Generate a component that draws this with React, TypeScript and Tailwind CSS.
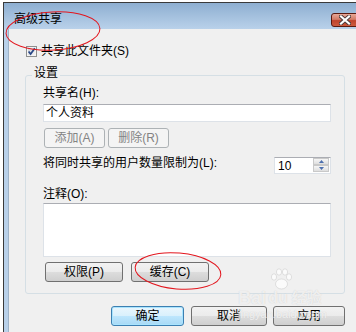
import React from 'react';

// ── Win7 style push button ────────────────────────────────────────────────────

type Kind = 'normal' | 'disabled' | 'default';

const BTN_STYLES: Record<Kind, string> = {
  normal:
    'border-[#707070] bg-[linear-gradient(#f2f2f2,#ebebeb_50%,#dddddd_50%,#cfcfcf)] text-black',
  disabled: 'border-[#adb2b5] bg-[#f4f4f4] text-[#838383]',
  default:
    'border-[#3c7fb1] bg-[linear-gradient(#eaf6fd,#d9f0fc_50%,#bee6fd_50%,#a7d9f5)] text-black shadow-[inset_0_0_0_1px_#a9e4fe]',
};

function Btn({ label, kind = 'normal', className = '' }: { label: string; kind?: Kind; className?: string }) {
  return (
    <div
      className={`h-[20px] shrink-0 rounded-[3px] border flex items-center justify-center text-[12px] leading-[12px] ${BTN_STYLES[kind]} ${className}`}
    >
      {label}
    </div>
  );
}

function CheckBox() {
  return (
    <svg width="11" height="11" viewBox="0 0 11 11" className="shrink-0">
      <defs>
        <linearGradient id="cb" x1="0" y1="0" x2="1" y2="1">
          <stop offset="0" stopColor="#cbcfd5" />
          <stop offset="1" stopColor="#f6f6f6" />
        </linearGradient>
      </defs>
      <rect x="0.5" y="0.5" width="10" height="10" fill="#f4f4f4" stroke="#8e8f8f" />
      <rect x="2" y="2" width="7" height="7" fill="url(#cb)" />
      <path d="M2.6 5.4 L4.6 8 L8.8 2.2" fill="none" stroke="#2a4787" strokeWidth="1.7" />
    </svg>
  );
}

function Spinner() {
  return (
    <div className="w-[57px] h-[17px] border border-[#dde2e8] border-t-[#abadb3] bg-white flex items-start">
      <span className="pl-[3px] pt-[2px] leading-[12px] flex-1">10</span>
      <div className="w-[16px] h-[14px] flex flex-col mr-[1px]">
        {[0, 1].map(i => (
          <div
            key={i}
            className="flex-1 border border-[#c9c9c9] bg-[linear-gradient(#f6f6f6,#dedede)] flex items-center justify-center"
          >
            <svg width="5" height="3" viewBox="0 0 5 3">
              <path d={i === 0 ? 'M0 3 L2.5 0 L5 3 Z' : 'M0 0 L2.5 3 L5 0 Z'} fill="#4c6fae" />
            </svg>
          </div>
        ))}
      </div>
    </div>
  );
}

// ── Dialog ───────────────────────────────────────────────────────────────────

export default function App() {
  return (
    <div className="relative w-[356px] h-[332px] overflow-hidden bg-white text-[12px] text-black font-['Liberation_Sans','Noto_Sans_CJK_SC',sans-serif]">
      <div className="mt-[2px] ml-[3px] w-[400px] h-[400px] border-l border-t border-[#3a3a3a] bg-[#b9d1ea] flex flex-col">
        {/* title bar */}
        <div className="relative h-[26px] shrink-0 bg-[linear-gradient(#8eafd1,#b9d1ea)] pl-[10px] pt-[10px] leading-[13px]">
          高级共享
          <div className="absolute left-[327px] top-[10px] w-[30px] h-[14px] rounded-[3px] border border-[#5a1a10] bg-[linear-gradient(#e7a797,#d27b66_45%,#bf432c_55%,#cc5a3e)] flex items-center pl-[7px]">
            <svg width="12" height="10" viewBox="0 0 12 10">
              <path d="M2 1.5 L10 8.5 M10 1.5 L2 8.5" stroke="#4a3a3a" strokeWidth="4" strokeLinecap="square" />
              <path d="M2 1.5 L10 8.5 M10 1.5 L2 8.5" stroke="#ffffff" strokeWidth="2.2" strokeLinecap="square" />
            </svg>
          </div>
        </div>

        <div className="flex flex-1">
          <div className="w-[4px] shrink-0" />
          <div className="flex-1 bg-[#f0f0f0] border-l border-[#9fb3c8] flex flex-col pt-[16px] pl-[16px]">
            {/* share checkbox */}
            <div className="h-[13px] flex items-center gap-[4px] pl-[1px] leading-[13px]">
              <CheckBox />
              <span>共享此文件夹(S)</span>
            </div>

            {/* settings group */}
            <div className="mt-[17px] w-[320px] h-[219px] border border-[#d5dfe5] rounded-[3px] pl-[17px] flex flex-col">
              <div className="-mt-[9px] -ml-[11px] w-fit px-[2px] h-[12px] leading-[12px] bg-[#f0f0f0]">设置</div>

              <div className="mt-[8px] leading-[12px]">共享名(H):</div>
              <div className="mt-[5px] w-[288px] h-[18px] border border-[#dde2e8] border-t-[#abadb3] bg-white pl-[2px] leading-[16px]">
                个人资料
              </div>

              <div className="mt-[6px] ml-[1px] flex gap-[3px]">
                <Btn label="添加(A)" kind="disabled" className="w-[61px]" />
                <Btn label="删除(R)" kind="disabled" className="w-[61px]" />
              </div>

              <div className="mt-[9px] w-[288px] flex justify-between items-start">
                <span className="leading-[12px]">将同时共享的用户数量限制为(L):</span>
                <Spinner />
              </div>

              <div className="mt-[14px] leading-[12px]">注释(O):</div>
              <div className="mt-[3px] w-[288px] h-[54px] border border-[#dde2e8] border-t-[#abadb3] bg-white" />

              <div className="mt-[5px] ml-[2px] flex gap-[8px]">
                <Btn label="权限(P)" className="w-[78px]" />
                <Btn label="缓存(C)" className="w-[78px]" />
              </div>
            </div>

            {/* dialog buttons */}
            <div className="mt-[12px] w-[320px] flex justify-end">
              <Btn label="确定" kind="default" className="w-[73px] mr-[7px]" />
              <Btn label="取消" className="w-[76px] mr-[6px]" />
              <Btn label="应用" className="w-[72px]" />
            </div>
          </div>
        </div>
      </div>

      {/* baidu watermark */}
      <div className="pointer-events-none absolute left-[238px] top-[268px] text-white/70 [text-shadow:0_0_1px_#c8c8c8]">
        <svg width="26" height="22" viewBox="0 0 26 22" className="ml-[30px]">
          <g fill="#ffffff" fillOpacity="0.7" stroke="#cfcfcf" strokeWidth="0.6">
            <ellipse cx="6" cy="9" rx="2.6" ry="3.2" />
            <ellipse cx="11" cy="4" rx="2.6" ry="3.2" />
            <ellipse cx="17" cy="4" rx="2.6" ry="3.2" />
            <ellipse cx="21" cy="9" rx="2.6" ry="3.2" />
            <ellipse cx="13.5" cy="16" rx="6" ry="5" />
          </g>
        </svg>
        <div className="flex items-end gap-[2px] leading-[16px] font-bold">
          <span className="text-[18px] font-['Liberation_Sans',sans-serif]">Bai</span>
          <span className="text-[16px] font-['Liberation_Sans',sans-serif]">du</span>
          <span className="text-[15px] ml-[2px]">经验</span>
        </div>
        <div className="text-[11px] leading-[14px] mt-[1px]">jingyan.baidu.com</div>
      </div>

      {/* red annotation ellipses */}
      <svg className="pointer-events-none absolute left-0 top-0" width="356" height="332" viewBox="0 0 356 332">
        <ellipse cx="53" cy="31" rx="47" ry="19" transform="rotate(-3 53 31)" fill="none" stroke="#e3161e" strokeWidth="1" />
        <ellipse cx="178" cy="271" rx="43" ry="18" transform="rotate(5 178 271)" fill="none" stroke="#e3161e" strokeWidth="1" />
      </svg>
    </div>
  );
}
